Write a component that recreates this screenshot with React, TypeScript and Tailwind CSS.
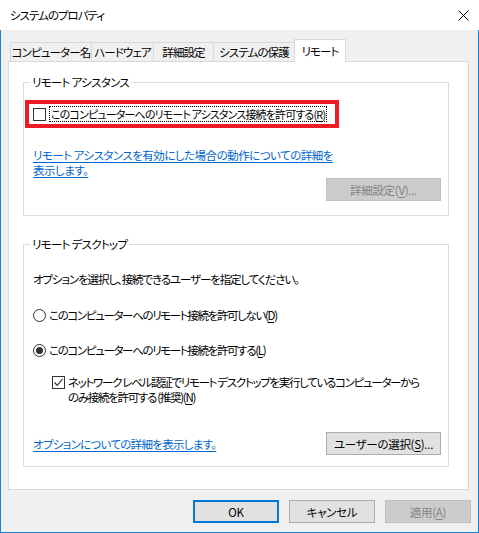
const TABS = [
  { label: "コンピューター名", width: "w-[81px]" },
  { label: "ハードウェア", width: "w-[62px]" },
  { label: "詳細設定", width: "w-[60px]" },
  { label: "システムの保護", width: "w-[81px]" },
];

const Key = ({ k }: { k: string }) => (
  <>
    (<span className="underline underline-offset-2">{k}</span>)
  </>
);

const CheckBox = ({ checked }: { checked?: boolean }) => (
  <span className="flex h-[13px] w-[13px] shrink-0 items-center justify-center border border-[#333333] bg-white">
    {checked && (
      <svg width="11" height="11" viewBox="0 0 11 11">
        <path d="M1.5 5.5 L4.2 8.3 L9.5 2.2" fill="none" stroke="#333333" strokeWidth="1.2" />
      </svg>
    )}
  </span>
);

const Radio = ({ checked }: { checked?: boolean }) => (
  <span className="flex h-[13px] w-[13px] shrink-0 items-center justify-center rounded-full border border-[#333333] bg-white">
    {checked && <span className="h-[7px] w-[7px] rounded-full bg-[#333333]" />}
  </span>
);

const Button = ({
  children,
  className = "",
}: {
  children: React.ReactNode;
  className?: string;
}) => (
  <button
    type="button"
    className={`flex h-[23px] items-center justify-center whitespace-nowrap border text-[11.5px] tracking-[-0.3px] ${className}`}
  >
    {children}
  </button>
);

export default function App() {
  return (
    <div className="flex h-[533px] w-[479px] flex-col bg-white font-['Noto_Sans_CJK_JP','Noto_Sans',sans-serif] text-[11.5px] leading-[16px] tracking-[-0.7px] text-black [font-feature-settings:'palt']">
      {/* title bar */}
      <div className="flex h-[30px] shrink-0 items-center justify-between pl-[10px] pr-[10px]">
        <span className="tracking-[-1px]">システムのプロパティ</span>
        <svg width="11" height="11" viewBox="0 0 11 11">
          <path d="M0.5 0.5 L10.5 10.5 M10.5 0.5 L0.5 10.5" stroke="#000" strokeWidth="1" />
        </svg>
      </div>

      <div className="flex flex-1 flex-col border-x border-b border-[#1883d7] bg-[#f0f0f0] pl-[7px] pr-[9px] pt-[9px]">
        {/* tabs */}
        <div className="relative z-10 -mb-px flex h-[23px] items-end pl-[2px]">
          {TABS.map((t) => (
            <div
              key={t.label}
              className={`mb-px flex h-[19px] items-center justify-center whitespace-nowrap border-l border-t border-[#d9d9d9] bg-[#f0f0f0] tracking-[-0.9px] ${t.width}`}
            >
              {t.label}
            </div>
          ))}
          <div className="flex h-[23px] w-[52px] items-start justify-center whitespace-nowrap border-x border-t border-[#d9d9d9] bg-white pt-[3px] tracking-[-0.9px]">
            リモート
          </div>
        </div>

        {/* panel */}
        <div className="flex h-[429px] flex-col border border-[#d9d9d9] bg-white pl-[14px] pt-[12px]">
          <fieldset className="flex w-[426px] flex-col border border-[#dcdcdc] pb-[14px]">
            <legend className="ml-[6px] px-[2px]">リモート アシスタンス</legend>
            <div className="ml-px mt-[10px] flex h-[28px] w-[314px] items-center border-4 border-[#ed1c24] pl-[4px]">
              <CheckBox />
              <span className="ml-[3px] whitespace-nowrap border border-dotted border-black px-px text-[11px] leading-[14px] tracking-[-0.85px]">
                このコンピューターへのリモート アシスタンス接続を許可する<Key k="R" />
              </span>
            </div>
            <a className="ml-[9px] mt-[20px] block leading-[15px] tracking-[-0.5px] text-[#0066cc] underline underline-offset-2">
              リモート アシスタンスを有効にした場合の動作についての詳細を
              <br />
              表示します。
            </a>
            <div className="flex justify-end pr-[7px]">
              <Button className="w-[115px] border-[#bfbfbf] bg-[#cccccc] text-[#838383]">
                詳細設定<Key k="V" />...
              </Button>
            </div>
          </fieldset>

          <fieldset className="mt-[20px] flex w-[426px] flex-col border border-[#dcdcdc] pb-[11px]">
            <legend className="ml-[6px] px-[2px]">リモート デスクトップ</legend>
            <p className="ml-[9px] mt-[19px] whitespace-nowrap tracking-[-1.1px]">
              オプションを選択し、接続できるユーザーを指定してください。
            </p>
            <div className="ml-[9px] mt-[20px] flex items-center gap-[3px]">
              <Radio />
              <span className="whitespace-nowrap tracking-[-1.35px]">
                このコンピューターへのリモート接続を許可しない<Key k="D" />
              </span>
            </div>
            <div className="ml-[9px] mt-[19px] flex items-center gap-[3px]">
              <Radio checked />
              <span className="whitespace-nowrap tracking-[-1.35px]">
                このコンピューターへのリモート接続を許可する<Key k="L" />
              </span>
            </div>
            <div className="ml-[28px] mt-[17px] flex items-start gap-[3px]">
              <span className="mt-px">
                <CheckBox checked />
              </span>
              <span className="whitespace-nowrap leading-[15px] tracking-[-1.3px]">
                ネットワーク レベル認証でリモート デスクトップを実行しているコンピューターから
                <br />
                のみ接続を許可する (推奨)<Key k="N" />
              </span>
            </div>
            <div className="mt-[27px] flex items-center justify-between pl-[9px] pr-[7px]">
              <a className="whitespace-nowrap text-[#0066cc] underline underline-offset-2">
                オプションについての詳細を表示します。
              </a>
              <Button className="w-[115px] border-[#adadad] bg-[#e1e1e1]">
                ユーザーの選択<Key k="S" />...
              </Button>
            </div>
          </fieldset>
        </div>

        {/* dialog buttons */}
        <div className="mt-[10px] flex justify-end gap-[10px]">
          <Button className="w-[86px] border-2 border-[#0078d7] bg-[#e1e1e1]">OK</Button>
          <Button className="w-[86px] border-[#adadad] bg-[#e1e1e1]">キャンセル</Button>
          <Button className="-mr-[2px] w-[86px] border-[#bfbfbf] bg-[#cccccc] text-[#838383]">
            適用<Key k="A" />
          </Button>
        </div>
      </div>
    </div>
  );
}
